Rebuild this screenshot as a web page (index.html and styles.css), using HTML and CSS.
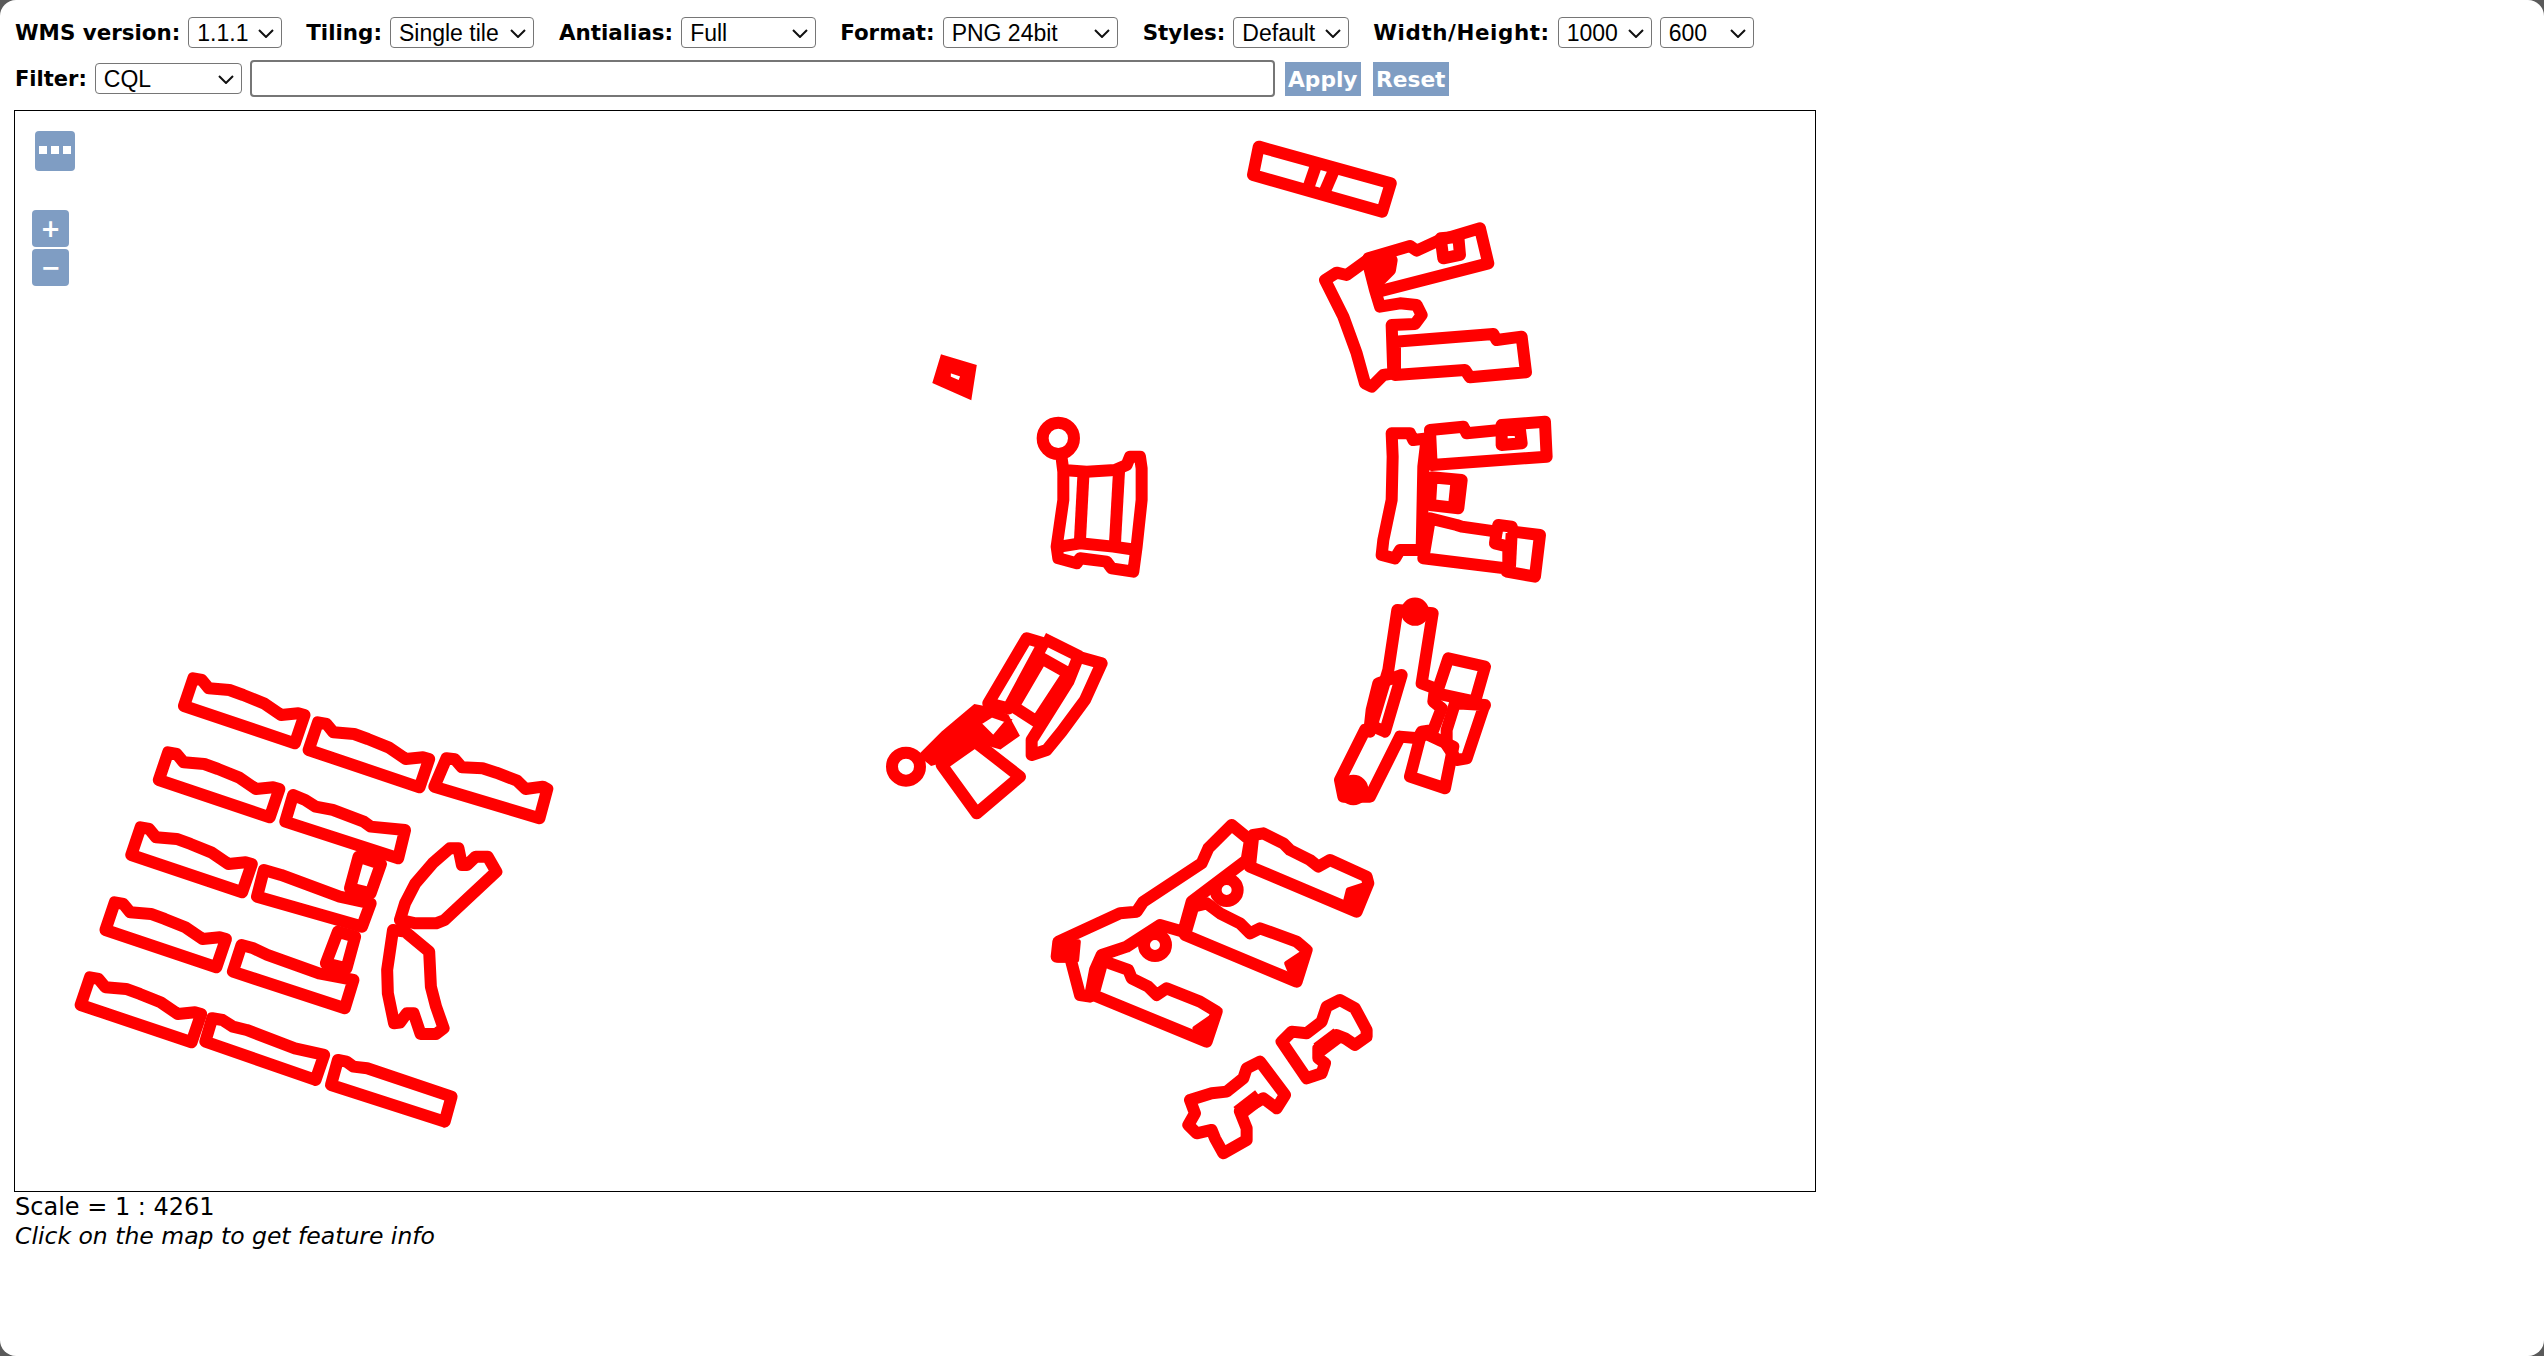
FILE: index.html
```html
<!DOCTYPE html>
<html lang="en">
<head>
    <meta charset="UTF-8">
    <title>WMS preview</title>
    <link rel="stylesheet" href="styles.css">
</head>
<body>
    <div class="opciones">
        <div class="fila">
            <label class="campo version"><b>WMS version:</b>
                <select class="w-94"><option>1.1.1</option></select></label>
            <label class="campo tiling"><b>Tiling:</b>
                <select class="w-144"><option>Single tile</option></select></label>
            <label class="campo antialias"><b>Antialias:</b>
                <select class="w-135"><option>Full</option></select></label>
            <label class="campo formato"><b>Format:</b>
                <select class="w-175"><option>PNG 24bit</option></select></label>
            <label class="campo estilos"><b>Styles:</b>
                <select class="w-116"><option>Default</option></select></label>
            <label class="campo ancho"><b>Width/Height:</b>
                <select class="w-94"><option>1000</option></select>
                <select class="w-94"><option>600</option></select></label>
        </div>
        <div class="fila fila-filtro">
            <label class="campo"><b>Filter:</b>
                <select class="w-147"><option>CQL</option></select></label>
            <input type="text" class="filtro">
            <button class="boton">Apply</button>
            <button class="boton">Reset</button>
        </div>
    </div>

    <div class="mapa">
        <svg class="capa" viewBox="15 111 1800 1080" width="1800" height="1080">
            <defs>
                <polygon id="bloque" points="445,115 470,120 490,145 550,150 590,165 650,190 700,225 750,220 768,225 740,310 418,198"/>
            </defs>

            <!-- bloques abajo a la izquierda -->
            <g transform="translate(40 640) scale(.3444 .3333)">
                <use href="#bloque"/>
                <use href="#bloque" x="362" y="132"/>
                <use href="#bloque" x="-73" y="222"/>
                <use href="#bloque" x="-153" y="447"/>
                <use href="#bloque" x="-228" y="672"/>
                <use href="#bloque" x="-300" y="897"/>
                <polygon points="1180,355 1205,358 1225,382 1285,385 1325,398 1385,422 1410,447 1460,440 1473,447 1450,535 1145,440"/>
                <polygon points="735,465 770,480 800,500 850,510 940,545 960,560 1060,570 1040,655 712,545"/>
                <polygon points="925,650 990,672 960,760 900,745"/>
                <polygon points="650,690 700,705 870,770 960,790 935,860 630,770"/>
                <polygon points="865,875 915,890 890,985 830,970"/>
                <polygon points="585,915 620,925 660,945 810,1000 910,1020 885,1105 560,995"/>
                <polygon points="500,1135 530,1140 560,1160 600,1170 740,1225 825,1245 800,1320 480,1205"/>
                <polygon points="865,1260 890,1265 910,1280 950,1285 1195,1370 1175,1445 845,1335"/>
                <polygon points="1045,840 1060,790 1090,730 1140,670 1190,625 1215,625 1225,675 1240,675 1265,650 1300,650 1325,695 1175,840 1150,850 1090,850"/>
                <polygon points="1025,870 1060,875 1130,935 1135,1040 1150,1100 1172,1165 1150,1182 1105,1182 1085,1120 1065,1120 1045,1148 1028,1150 1010,1060 1008,990"/>
            </g>

            <!-- barra de arriba -->
            <g transform="translate(900 0) scale(.574 .3333)">
                <polygon points="625,440 855,550 840,635 615,525"/>
                <polyline points="725,495 712,560"/>
                <polyline points="755,515 740,575"/>
            </g>

            <!-- grupo arriba a la derecha -->
            <g transform="translate(1280 120) scale(.3333)">
                <polygon points="135,480 170,458 200,465 262,420 285,510 300,560 360,550 410,555 425,585 405,612 335,615 340,760 310,765 275,800 255,790 230,700 190,590"/>
                <polygon points="265,415 390,378 410,392 475,362 600,325 625,430 295,515"/>
                <polygon points="482,355 535,350 540,405 490,415"/>
                <polygon points="290,430 335,420 330,450 300,480"/>
                <polygon points="345,665 640,642 650,660 725,650 738,757 570,772 555,750 345,765"/>
            </g>

            <!-- grupo del centro a la derecha -->
            <g transform="translate(1320 400) scale(.3333)">
                <polygon points="215,100 270,100 280,120 320,115 310,200 305,450 240,450 225,475 185,465 190,420 215,300 218,170"/>
                <polygon points="330,90 430,80 440,100 540,90 545,75 675,65 680,170 335,195"/>
                <polygon points="545,90 600,90 605,130 545,135"/>
                <polygon points="335,232 425,240 415,325 330,315"/>
                <polyline points="410,240 402,320"/>
                <polygon points="330,355 410,375 425,380 530,395 535,375 575,380 580,395 660,405 645,530 560,515 555,505 310,475"/>
                <polyline points="530,395 525,430 565,440 565,505"/>
                <polyline points="575,400 570,500"/>
                <polygon points="232,630 338,640 305,850 345,865 340,905 365,925 340,990 305,995 295,1015 240,1010 150,1190 70,1190 60,1140 135,990 150,995 205,810"/>
                <polygon points="175,850 245,825 195,995 150,975 155,930"/>
                <polygon points="385,775 495,800 465,905 350,880"/>
                <polygon points="405,910 495,915 490,925 440,1075 410,1080 380,1035 380,990"/>
                <polygon points="315,1000 400,1040 375,1165 270,1130 300,1015"/>
                <circle class="lleno" cx="285" cy="635" r="35"/>
                <circle class="lleno" cx="100" cy="1170" r="38"/>
            </g>

            <!-- cuadrito y edificio con circulo -->
            <g transform="translate(920 340) scale(.3333)">
                <path class="lleno" fill-rule="evenodd" d="M68 52 162 80 148 170 46 125ZM85 90 130 105 120 130 85 115Z"/>
                <circle cx="415" cy="295" r="47"/>
                <polygon points="425,355 430,390 500,395 585,390 620,375 630,350 660,350 665,385 665,480 650,620 640,695 575,685 560,665 480,655 470,670 415,655 410,620 430,480 430,395"/>
                <polyline points="490,410 480,600"/>
                <polyline points="597,395 585,610"/>
                <polyline points="420,620 480,610 580,620 650,630"/>
            </g>

            <!-- edificio curvo del centro -->
            <g transform="translate(860 600) scale(.3333)">
                <circle cx="138" cy="500" r="42"/>
                <polygon points="500,115 550,130 445,325 385,310"/>
                <polyline points="550,115 660,170"/>
                <polygon points="545,175 625,220 530,365 460,320"/>
                <polygon points="655,170 725,190 675,300 605,395 560,450 515,465 515,420 625,245"/>
                <path class="lleno" fill-rule="evenodd" d="M185 465 250 400 345 320 395 330 440 350 470 405 420 440 350 420 250 480 215 490ZM355 370 395 345 445 362 400 415Z"/>
                <polygon points="345,425 480,530 350,640 245,495"/>
            </g>

            <!-- grupo de abajo -->
            <g transform="translate(1020 800) scale(.3333)">
                <polygon points="115,425 300,340 350,335 370,305 545,190 565,145 635,75 690,120 680,180 515,305 490,395 420,375 320,440 245,465 225,510 210,590 180,585 150,470 110,470"/>
                <polygon points="700,105 730,100 790,130 810,150 870,180 895,200 930,180 1040,230 1045,250 1010,335 690,200"/>
                <polygon class="lleno" points="985,270 1045,250 1015,340 975,310"/>
                <polygon points="520,320 560,310 600,340 660,370 690,400 720,385 830,425 860,450 830,545 495,405"/>
                <polygon class="lleno" points="800,490 860,450 825,550"/>
                <polygon points="250,475 270,490 325,510 335,535 385,560 410,585 440,565 540,605 590,635 560,725 220,585"/>
                <polygon class="lleno" points="525,685 590,640 555,725"/>
                <polygon class="lleno" points="115,425 175,425 170,480 115,480"/>
                <circle cx="620" cy="270" r="33"/>
                <circle cx="405" cy="435" r="33"/>
                <polygon points="785,725 815,695 860,700 905,665 920,620 960,600 1005,625 1040,690 1040,710 1005,735 975,715 950,705 895,745 895,775 915,790 905,820 860,835"/>
                <polyline class="grueso" points="895,750 955,705"/>
                <polygon points="510,900 575,880 620,875 670,835 680,805 720,785 795,885 770,925 730,895 660,935 680,985 680,1020 610,1060 585,1015 575,990 530,1000 505,975 525,940"/>
                <polyline class="grueso" points="655,940 720,890"/>
            </g>
        </svg>

        <button class="control puntos"><i></i><i></i><i></i></button>
        <div class="zoom">
            <button class="control">+</button>
            <button class="control">−</button>
        </div>
    </div>

    <div class="escala">Scale = 1 : 4261</div>
    <div class="info">Click on the map to get feature info</div>
</body>
</html>
```

FILE: styles.css
```css
html {
    background: #5a5a5a;
    height: 100%;
}

body {
    background: white;
    margin: 0;
    height: 100%;
    padding: 17px 14px 0;
    box-sizing: border-box;
    border-radius: 16px;
    font-family: 'DejaVu Sans', sans-serif;
    font-size: 23px;
    color: black;
}

.opciones {
    width: 1802px;
}

.fila {
    display: flex;
    align-items: center;
    height: 31px;
    padding-left: 1px;
}

.fila-filtro {
    height: 37px;
    margin-top: 12px;
    margin-bottom: 13px;
}

.campo {
    display: flex;
    align-items: center;
    gap: 8px;
}

.campo b {
    font-size: 21.4px;
    white-space: nowrap;
}

.fila-filtro .campo b {
    font-size: 21px;
}

.ancho b {
    letter-spacing: .6px;
}

.version { margin-right: 24px; }
.tiling { margin-right: 25px; }
.antialias { margin-right: 24px; }
.formato { margin-right: 25px; }
.estilos { margin-right: 24px; }

select {
    appearance: none;
    font-family: 'Liberation Sans', sans-serif;
    font-size: 23px;
    height: 31px;
    padding: 0 0 0 8px;
    box-sizing: border-box;
    background: white url("data:image/svg+xml,%3Csvg xmlns='http://www.w3.org/2000/svg' width='16' height='9'%3E%3Cpath d='M1 1l7 7 7-7' fill='none' stroke='%23111' stroke-width='2'/%3E%3C/svg%3E") no-repeat right 7px top 11px;
    border: 1px solid #767676;
    border-radius: 4px;
    color: black;
}

.w-94 { width: 94px; }
.w-116 { width: 116px; }
.w-135 { width: 135px; }
.w-144 { width: 144px; }
.w-147 { width: 147px; }
.w-175 { width: 175px; }

.filtro {
    width: 1025px;
    height: 37px;
    box-sizing: border-box;
    margin: 0 10px 0 8px;
    border: 2px solid #767676;
    border-radius: 4px;
}

.boton {
    background: #7f9dc3;
    color: white;
    border: none;
    width: 76px;
    height: 34px;
    padding: 0;
    margin: 1px 12px 0 0;
    font-family: 'DejaVu Sans', sans-serif;
    font-size: 21.7px;
    font-weight: bold;
}

.mapa {
    position: relative;
    width: 1800px;
    height: 1080px;
    border: 1px solid black;
}

/* el mapa original es una imagen escalada, por eso el borde algo borroso */
.capa {
    display: block;
    filter: blur(.6px);
}

.capa polygon, .capa polyline, .capa circle, .capa use {
    fill: none;
    stroke: #f00;
    stroke-width: 12;
    stroke-linejoin: round;
}

.capa polygon, .capa polyline, .capa circle {
    vector-effect: non-scaling-stroke;
}

.capa .grueso {
    stroke-width: 16;
}

.capa .lleno {
    fill: #f00;
    stroke: #f00;
    stroke-width: 5;
    vector-effect: non-scaling-stroke;
}

.control {
    display: block;
    background: #7f9dc3;
    color: white;
    border: none;
    border-radius: 4px;
    padding: 0;
    font-family: 'DejaVu Sans', sans-serif;
    font-weight: bold;
    font-size: 24px;
    line-height: 1;
}

.puntos {
    position: absolute;
    top: 20px;
    left: 20px;
    width: 40px;
    height: 40px;
    padding-bottom: 2px;
    display: flex;
    align-items: center;
    justify-content: center;
    gap: 4px;
}

.puntos i {
    width: 8px;
    height: 8px;
    background: white;
}

.zoom {
    position: absolute;
    top: 99px;
    left: 17px;
    display: flex;
    flex-direction: column;
    gap: 2px;
}

.zoom .control {
    width: 37px;
    height: 37px;
}

.escala, .info {
    padding-left: 1px;
    height: 29px;
    line-height: 29px;
    position: relative;
    top: 1px;
}

.escala {
    font-size: 24px;
}

.info {
    font-size: 23.5px;
    font-style: italic;
}
```
